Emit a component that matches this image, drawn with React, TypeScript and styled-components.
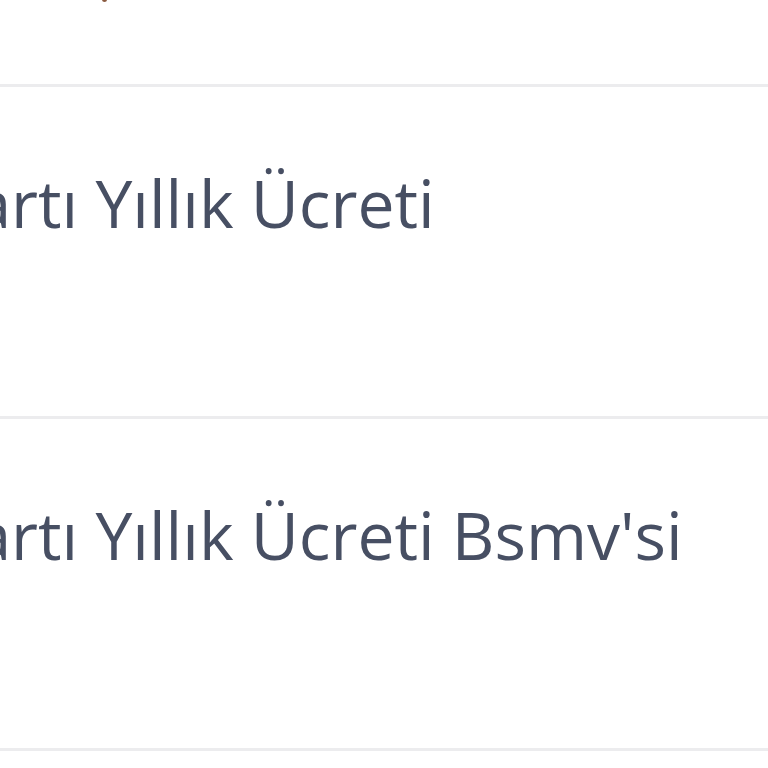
import React from "react";
import styled, { createGlobalStyle } from "styled-components";

const Global = createGlobalStyle`
  html, body { margin: 0; padding: 0; background: #ffffff; }
  body { font-family: "Open Sans", "Noto Sans", sans-serif; overflow: hidden; }
`;

const Table = styled.div`
  width: 768px;
  height: 768px;
  overflow: hidden;
  display: flex;
  flex-direction: column;
  background: #fff;
`;

const TopRow = styled.div`
  height: 84px;
  flex: none;
  border-bottom: 3px solid #ececee;
  position: relative;
`;

const Mark = styled.span`
  position: absolute;
  left: 102px;
  top: -3px;
  width: 5px;
  height: 5px;
  border-radius: 50%;
  background: #8a5a40;
`;

const Row = styled.div`
  height: 329px;
  flex: none;
  border-bottom: 3px solid #ececee;
  display: flex;
  align-items: flex-start;
`;

const Cell = styled.div`
  padding-top: 82px;
  margin-left: -66px;
  font-size: 66px;
  line-height: 66px;
  color: #474f63;
  white-space: nowrap;
`;

const rows = ["Kartı Yıllık Ücreti", "Kartı Yıllık Ücreti Bsmv'si"];

export default function App() {
  return (
    <>
      <Global />
      <Table>
        <TopRow>
          <Mark />
        </TopRow>
        {rows.map((r) => (
          <Row key={r}>
            <Cell>{r}</Cell>
          </Row>
        ))}
      </Table>
    </>
  );
}
